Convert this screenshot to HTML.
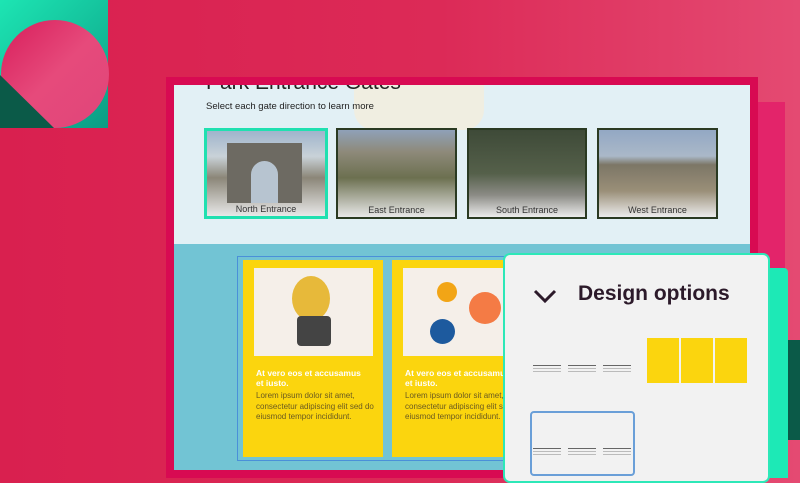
<!DOCTYPE html>
<html><head><style>
*{margin:0;padding:0;box-sizing:border-box}
body{width:800px;height:478px;overflow:hidden;position:relative;background:linear-gradient(90deg,#d9204f 0%,#dc2a57 55%,#e44a72 100%);font-family:"Liberation Sans",sans-serif}
.a{position:absolute}
.thumb{position:absolute;top:128px;height:91px;border:2px solid #2a3a22;overflow:hidden}
.thumb span{position:absolute;bottom:2px;left:0;right:0;text-align:center;font-size:9px;color:#333}
.card{position:absolute;top:260px;width:140px;height:197px;background:#fbd50e}
.card .img{position:absolute;left:11px;top:8px;width:119px;height:88px;background:#f5efe9}
.card h4{position:absolute;left:13px;top:108px;font-size:8.5px;color:#fff;line-height:10px;font-weight:bold}
.card p{position:absolute;left:13px;top:131px;font-size:8px;color:#6a5a20;line-height:10.5px;width:125px}
.mini{position:absolute;width:28px}
.mini i{display:block;height:1px;background:#bbb;margin-bottom:2px}
.mini i:first-child{background:#666}
</style></head><body>
<div class="a" style="left:0;top:0;width:108px;height:128px;background:linear-gradient(135deg,#1de5b3,#0b9c84)"></div>
<div class="a" style="left:1px;top:20px;width:108px;height:108px;border-radius:50%;background:linear-gradient(135deg,#d81e5b,#e64a7b 50%,#e0457a)"></div>
<div class="a" style="left:0;top:75px;width:54px;height:53px;background:#0b5a48;clip-path:polygon(0 0,100% 100%,0 100%)"></div>
<div class="a" style="left:757px;top:102px;width:28px;height:376px;background:#e3246a"></div>
<div class="a" style="left:166px;top:77px;width:592px;height:401px;background:#d80a52"></div>
<div class="a" style="left:174px;top:85px;width:576px;height:385px;background:#e2f0f5;overflow:hidden">
  <div class="a" style="left:180px;top:0;width:130px;height:45px;background:#f6ecd8;opacity:.7;border-radius:0 0 20px 20px"></div>
  <div class="a" style="left:32px;top:-14px;font-size:21px;color:#222">Park Entrance Gates</div>
  <div class="a" style="left:32px;top:16px;font-size:9.5px;color:#222">Select each gate direction to learn more</div>
</div>
<div class="thumb" style="left:204px;width:124px;border:3px solid #20e0b0;background:linear-gradient(180deg,#9fb4cc 0%,#c9d2d8 30%,#8b8678 55%,#e8e8e8 100%)"><div class="a" style="left:20px;top:12px;width:75px;height:60px;background:#6d6a62"></div><div class="a" style="left:44px;top:30px;width:27px;height:42px;border-radius:14px 14px 0 0;background:#b7c4d0"></div><span>North Entrance</span></div>
<div class="thumb" style="left:336px;width:121px;background:linear-gradient(180deg,#8fa1b8 0%,#8e8a7a 25%,#6c7050 55%,#e8e8e8 100%)"><span>East Entrance</span></div>
<div class="thumb" style="left:467px;width:120px;background:linear-gradient(180deg,#3e4a38 0%,#55604a 50%,#8c8c86 75%,#ececec 100%)"><span>South Entrance</span></div>
<div class="thumb" style="left:597px;width:121px;background:linear-gradient(180deg,#93a8c4 0%,#aab8c8 30%,#7c7666 40%,#9a8f78 70%,#ececec 100%)"><span>West Entrance</span></div>
<div class="a" style="left:174px;top:244px;width:576px;height:226px;background:#72c4d4"></div>
<div class="a" style="left:237px;top:256px;width:280px;height:205px;border:1px solid #4a90d9"></div>
<div class="card" style="left:243px"><div class="img"><div class="a" style="left:38px;top:8px;width:38px;height:45px;border-radius:50%;background:#e7b93a"></div><div class="a" style="left:43px;top:48px;width:34px;height:30px;background:#444;border-radius:4px"></div></div><h4>At vero eos et accusamus<br>et iusto.</h4><p>Lorem ipsum dolor sit amet, consectetur adipiscing elit sed do eiusmod tempor incididunt.</p></div>
<div class="card" style="left:392px"><div class="img"><div class="a" style="left:34px;top:14px;width:20px;height:20px;border-radius:50%;background:#f2a516"></div><div class="a" style="left:66px;top:24px;width:32px;height:32px;border-radius:50%;background:#f47b45"></div><div class="a" style="left:27px;top:51px;width:25px;height:25px;border-radius:50%;background:#1d5a9e"></div></div><h4>At vero eos et accusamus<br>et iusto.</h4><p>Lorem ipsum dolor sit amet, consectetur adipiscing elit sed do eiusmod tempor incididunt.</p></div>
<div class="a" style="left:768px;top:268px;width:20px;height:210px;background:#1de9b6;border-radius:0 4px 0 0"></div>
<div class="a" style="left:788px;top:340px;width:12px;height:100px;background:#0b5a48"></div>
<div class="a" style="left:503px;top:253px;width:267px;height:230px;background:#f2f2f2;border:2px solid #2de8b8;border-radius:7px"></div>
<svg class="a" style="left:532px;top:287px" width="26" height="18"><path d="M3 4 L13 14 L23 4" stroke="#2c1a2a" stroke-width="3" fill="none"/></svg>
<div class="a" style="left:578px;top:282px;font-size:21px;font-weight:bold;color:#2c1a2a">Design options</div>
<div class="mini" style="left:533px;top:365px"><i></i><i></i><i></i></div>
<div class="mini" style="left:568px;top:365px"><i></i><i></i><i></i></div>
<div class="mini" style="left:603px;top:365px"><i></i><i></i><i></i></div>
<div class="a" style="left:647px;top:338px;width:32px;height:45px;background:#fbd50e"></div>
<div class="a" style="left:681px;top:338px;width:32px;height:45px;background:#fbd50e"></div>
<div class="a" style="left:715px;top:338px;width:32px;height:45px;background:#fbd50e"></div>
<div class="a" style="left:530px;top:411px;width:105px;height:65px;border:2px solid #6a9fd8;border-radius:4px"></div>
<div class="mini" style="left:533px;top:448px"><i></i><i></i><i></i></div>
<div class="mini" style="left:568px;top:448px"><i></i><i></i><i></i></div>
<div class="mini" style="left:603px;top:448px"><i></i><i></i><i></i></div>
</body></html>
